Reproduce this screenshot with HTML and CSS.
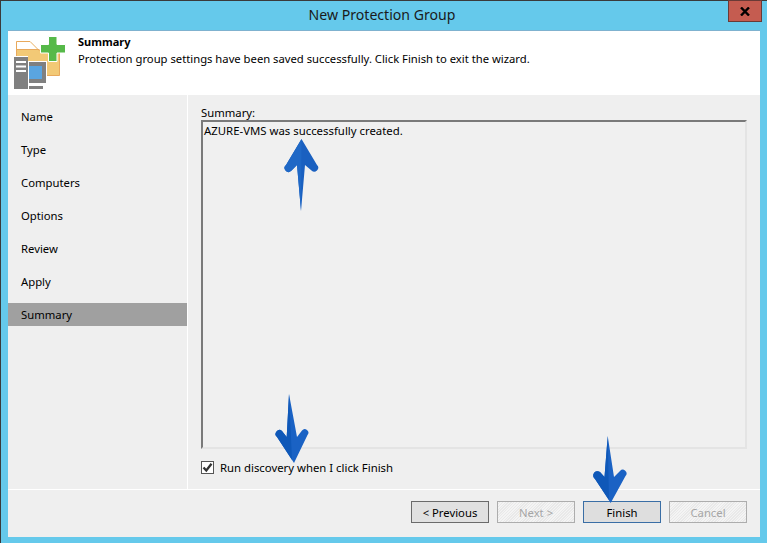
FILE: index.html
```html
<!DOCTYPE html>
<html lang="en">
<head>
<meta charset="utf-8">
<title>New Protection Group</title>
<link rel="stylesheet" href="styles.css">
</head>
<body>
<div class="window">
  <div class="titlebar">
    <div class="title">New Protection Group</div>
    <div class="close"><svg width="10" height="9" viewBox="0 0 10 9"><path d="M1 .5 L9 8.5 M9 .5 L1 8.5" stroke="#000" stroke-width="2.400" fill="none"/></svg></div>
  </div>
  <div class="client">
    <header class="header">
      <svg class="logo" width="58" height="60" viewBox="0 0 58 60">
        <path d="M2.500 14 V5.500 H16 L24.500 14 H45.500 V39.500 H2.500Z" fill="#f2c976" stroke="#e8a95c"/>
        <path d="M3 6 H16 L23.500 13.500 H3Z" fill="#fff"/>
        <path d="M3 13.500 H25" stroke="#e8a95c"/>
        <path d="M34.500 .5 H43 V8.500 H51.500 V17 H43 V25.500 H34.500 V17 H26.500 V8.500 H34.500Z" fill="#56b949" stroke="#fff"/>
        <rect x="14" y="25" width="19" height="29" fill="#fff"/>
        <path d="M15 26 H32 V47 H15Z" fill="#808080"/>
        <rect x="15" y="30" width="13" height="13" fill="#5aa5e0"/>
        <rect x="15" y="47" width="18" height="3" fill="#fff"/>
        <rect x="15" y="50" width="14" height="3" fill="#808080"/>
        <rect x="0" y="20" width="14" height="34" fill="#fff"/>
        <rect x="0" y="21" width="14" height="32" fill="#808080"/>
        <rect x="2" y="25" width="10" height="2" fill="#fff"/>
        <rect x="2" y="29.500" width="10" height="2" fill="#fff"/>
        <rect x="2" y="34" width="10" height="2" fill="#fff"/>
      </svg>
      <div class="header-text">
        <div class="header-title">Summary</div>
        <div class="header-desc">Protection group settings have been saved successfully. Click Finish to exit the wizard.</div>
      </div>
    </header>
    <div class="main">
      <nav class="side">
        <div class="step">Name</div>
        <div class="step">Type</div>
        <div class="step">Computers</div>
        <div class="step">Options</div>
        <div class="step">Review</div>
        <div class="step">Apply</div>
        <div class="step active">Summary</div>
      </nav>
      <section class="body">
        <div class="label">Summary:</div>
        <div class="log">AZURE-VMS was successfully created.</div>
        <label class="check">
          <span class="box"><svg width="11" height="11" viewBox="0 0 11 11"><path d="M1.500 5.500 L4.300 8.500 L9.500 1.800" stroke="#333" stroke-width="2.300" fill="none"/></svg></span>
          <span>Run discovery when I click Finish</span>
        </label>
      </section>
    </div>
    <footer class="footer">
      <button class="btn default">&lt; Previous</button>
      <button class="btn off">Next &gt;</button>
      <button class="btn focus">Finish</button>
      <button class="btn off">Cancel</button>
    </footer>
  </div>
  <svg class="arrows" width="767" height="543" viewBox="0 0 767 543">
    <path d="M301.500 139 L317 165 A3.500 3.500 0 0 1 311.500 170.500 L305 165 L301 211 L297 165 L291 171 A3.500 3.500 0 0 1 286 165Z" fill="#1a60c0"/>
    <path d="M301.500 139 L286 165 A3.500 3.500 0 0 0 291 171 L297 165 L301 211Z" fill="#1f68c6"/>
    <path d="M289 394 L297 437 L302 430.500 A3.500 3.500 0 0 1 307.500 435 L294 463 L277 437 A3.500 3.500 0 0 1 282 431 L286.700 437Z" fill="#1a62c4"/>
    <path d="M289 394 L286.700 437 L282 431 A3.500 3.500 0 0 0 277 437 L292 460Z" fill="#0f58b8"/>
    <path d="M607.700 436 L614 477 L620 471 A3.500 3.500 0 0 1 625.500 476 L610.700 503 L595 479 A3.500 3.500 0 0 1 600 472 L604.500 477Z" fill="#1a62c4"/>
    <path d="M607.700 436 L604.500 477 L600 472 A3.500 3.500 0 0 0 595 479 L609 500Z" fill="#0f58b8"/>
  </svg>
</div>
</body>
</html>
```
FILE: styles.css
```css
* { box-sizing: border-box; }
html, body { margin: 0; padding: 0; }
body { width: 767px; height: 543px; overflow: hidden; font-family: "Noto Sans", "Open Sans", sans-serif; font-size: 11.300px; color: #000; }
.window { position: relative; width: 767px; height: 543px; background: #65c9eb; border-top: 1px solid #3a3a3a; border-left: 1px solid #3a3a3a; display: flex; flex-direction: column; padding: 0 7px 6px 7px; }
.titlebar { position: relative; height: 29px; flex: none; display: flex; align-items: center; justify-content: center; }
.title { font-size: 14.100px; color: #1a1a1a; padding-bottom: 2px; margin-right: 4px; }
.close { position: absolute; right: -2px; top: -1px; width: 34px; height: 22px; background: #c55c50; border: 1px solid #6a3a36; display: flex; align-items: center; justify-content: center; }
.close svg { display: block; }
.client { flex: 1; display: flex; flex-direction: column; background: #efefef; border-top: 1px solid #7fb2cf; min-height: 0; }
.header { height: 64px; flex: none; background: #fff; display: flex; }
.logo { margin: 5px 0 0 6px; flex: none; }
.header-text { margin-left: 6px; padding-top: 2px; line-height: 18px; }
.header-title { font-weight: 700; font-size: 11px; height: 17px; }
.header-desc { white-space: nowrap; font-size: 11.250px; }
.main { flex: 1; display: flex; min-height: 0; }
.side { width: 180px; flex: none; border-right: 1px solid #fff; padding-top: 10px; display: flex; flex-direction: column; gap: 10px; }
.step { height: 23px; line-height: 24px; padding-left: 13px; }
.step.active { background: #a0a0a0; }
.body { flex: 1; padding: 10px 13px 0 13px; display: flex; flex-direction: column; }
.label { height: 15px; line-height: 16px; }
.log { height: 329px; flex: none; background: #f0f0f0; border: 2px solid #e4e4e4; border-top-color: #7a7a7a; border-left-color: #7a7a7a; padding: 0 0 0 1px; line-height: 17px; font-size: 11.380px; }
.check { display: flex; align-items: center; gap: 6px; margin-top: 11px; height: 14px; font-size: 11.350px; }
.box { width: 13px; height: 13px; border: 1px solid #555; background: #fff; display: flex; align-items: center; justify-content: center; flex: none; }
.box svg { display: block; }
.footer { height: 48px; flex: none; display: flex; justify-content: flex-end; gap: 8px; padding: 11px 13px 0 0; border-top: 1px solid #fff; }
.btn { width: 78px; height: 22px; font: inherit; padding: 0; background: #e1e1e1; border: 1px solid #6b6b6b; color: #000; border-radius: 0; }
.btn.focus { background: #dedede; border-color: #3a6ea5; }
.btn.off { color: #a6a6a6; border-color: #adadad; background: repeating-linear-gradient(135deg, #f4f4f4 0 1px, #e9e9e9 1px 2px); }
.arrows { position: absolute; left: -1px; top: -1px; pointer-events: none; }
```
